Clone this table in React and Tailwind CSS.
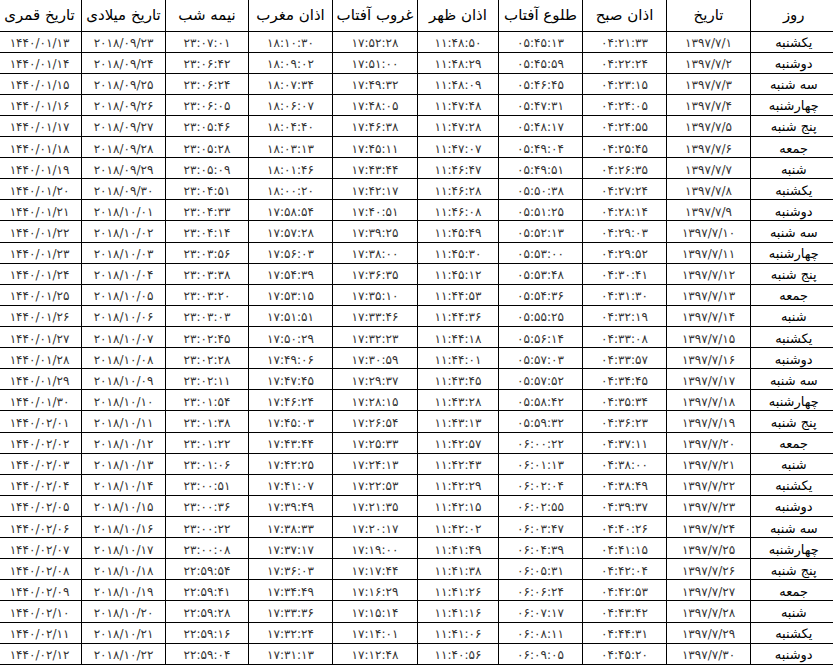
const HEAD = ["روز", "تاریخ", "اذان صبح", "طلوع آفتاب", "اذان ظهر", "غروب آفتاب", "اذان مغرب", "نیمه شب", "تاریخ میلادی", "تاریخ قمری"];
const COLS = [86, 84, 84, 84, 81, 85, 84, 83, 84, 84];

const DAYS = ["یکشنبه", "دوشنبه", "سه شنبه", "چهارشنبه", "پنج شنبه", "جمعه", "شنبه"];

// fajr | sunrise | dhuhr | sunset | maghrib | midnight | gregorian | hijri
const RAW = `
04:21:33 05:45:13 11:48:50 17:52:28 18:10:30 23:07:01 2018/09/23 1440/01/13
04:22:24 05:45:59 11:48:29 17:51:00 18:09:02 23:06:42 2018/09/24 1440/01/14
04:23:15 05:46:45 11:48:09 17:49:32 18:07:34 23:06:24 2018/09/25 1440/01/15
04:24:05 05:47:31 11:47:48 17:48:05 18:06:07 23:06:05 2018/09/26 1440/01/16
04:24:55 05:48:17 11:47:28 17:46:38 18:04:40 23:05:46 2018/09/27 1440/01/17
04:25:45 05:49:04 11:47:07 17:45:11 18:03:13 23:05:28 2018/09/28 1440/01/18
04:26:35 05:49:51 11:46:47 17:43:44 18:01:46 23:05:09 2018/09/29 1440/01/19
04:27:24 05:50:38 11:46:28 17:42:17 18:00:20 23:04:51 2018/09/30 1440/01/20
04:28:14 05:51:25 11:46:08 17:40:51 17:58:54 23:04:33 2018/10/01 1440/01/21
04:29:03 05:52:13 11:45:49 17:39:25 17:57:28 23:04:14 2018/10/02 1440/01/22
04:29:52 05:53:00 11:45:30 17:38:00 17:56:03 23:03:56 2018/10/03 1440/01/23
04:30:41 05:53:48 11:45:12 17:36:35 17:54:39 23:03:38 2018/10/04 1440/01/24
04:31:30 05:54:36 11:44:53 17:35:10 17:53:15 23:03:20 2018/10/05 1440/01/25
04:32:19 05:55:25 11:44:36 17:33:46 17:51:51 23:03:03 2018/10/06 1440/01/26
04:33:08 05:56:14 11:44:18 17:32:23 17:50:29 23:02:45 2018/10/07 1440/01/27
04:33:57 05:57:03 11:44:01 17:30:59 17:49:06 23:02:28 2018/10/08 1440/01/28
04:34:45 05:57:52 11:43:45 17:29:37 17:47:45 23:02:11 2018/10/09 1440/01/29
04:35:34 05:58:42 11:43:28 17:28:15 17:46:24 23:01:54 2018/10/10 1440/01/30
04:36:23 05:59:32 11:43:13 17:26:54 17:45:03 23:01:38 2018/10/11 1440/02/01
04:37:11 06:00:22 11:42:57 17:25:33 17:43:44 23:01:22 2018/10/12 1440/02/02
04:38:00 06:01:13 11:42:43 17:24:13 17:42:25 23:01:06 2018/10/13 1440/02/03
04:38:49 06:02:04 11:42:29 17:22:53 17:41:07 23:00:51 2018/10/14 1440/02/04
04:39:37 06:02:55 11:42:15 17:21:35 17:39:49 23:00:36 2018/10/15 1440/02/05
04:40:26 06:03:47 11:42:02 17:20:17 17:38:33 23:00:22 2018/10/16 1440/02/06
04:41:15 06:04:39 11:41:49 17:19:00 17:37:17 23:00:08 2018/10/17 1440/02/07
04:42:04 06:05:31 11:41:38 17:17:44 17:36:03 22:59:54 2018/10/18 1440/02/08
04:42:53 06:06:24 11:41:26 17:16:29 17:34:49 22:59:41 2018/10/19 1440/02/09
04:43:42 06:07:17 11:41:16 17:15:14 17:33:36 22:59:28 2018/10/20 1440/02/10
04:44:31 06:08:11 11:41:06 17:14:01 17:32:24 22:59:16 2018/10/21 1440/02/11
04:45:20 06:09:05 11:40:56 17:12:48 17:31:13 22:59:04 2018/10/22 1440/02/12
`;

const fa = (s) => s.replace(/\d/g, (d) => "۰۱۲۳۴۵۶۷۸۹"[d]);

const ROWS = RAW.trim().split("\n").map((line, i) => [
  DAYS[i % 7],
  `1397/7/${i + 1}`,
  ...line.trim().split(" "),
]);

export default function App() {
  return (
    <div className="w-[833px] h-[665px] overflow-hidden bg-white" style={{ fontFamily: '"DejaVu Sans", sans-serif' }}>
      <table dir="rtl" className="-ml-[3px] w-[839px] table-fixed border-collapse">
        <colgroup>
          {COLS.map((w, i) => <col key={i} style={{ width: w }} />)}
        </colgroup>
        <thead>
          <tr className="h-[31px]">
            {HEAD.map((h) => (
              <th key={h} className="border-b border-l border-black p-0 text-center align-middle text-[15px] font-normal text-black">{h}</th>
            ))}
          </tr>
        </thead>
        <tbody>
          {ROWS.map((r, i) => (
            <tr key={i} className="h-[21.12px]">
              {r.map((c, j) => (
                <td key={j} className={j === 0
                  ? "border-b border-l border-black p-0 pt-[2px] text-center align-middle text-[13px] leading-none text-black"
                  : "border-b border-l border-black p-0 pt-[3px] text-center align-middle text-[12px] leading-none text-[#333]"}>
                  {fa(c)}
                </td>
              ))}
            </tr>
          ))}
        </tbody>
      </table>
    </div>
  );
}
